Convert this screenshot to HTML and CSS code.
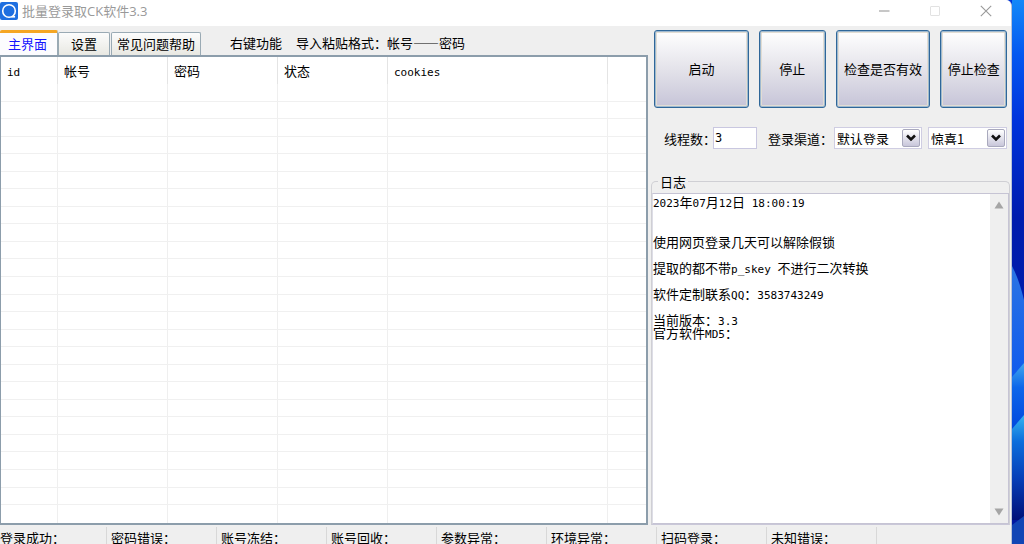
FILE: index.html
```html
<!DOCTYPE html>
<html lang="zh-CN">
<head>
<meta charset="utf-8">
<title>批量登录取CK软件3.3</title>
<link rel="stylesheet" href="styles.css">
</head>
<body>
<div class="desktop">
<div class="window">
  <header class="titlebar">
    <svg class="logo" width="18" height="18" viewBox="0 0 18 18" aria-hidden="true"><rect width="18" height="18" rx="2" fill="#1f6fe0"/><circle cx="9" cy="9" r="6.3" fill="none" stroke="#fff" stroke-width="1.6"/><path d="M11.5 14.8h3.6" stroke="#fff" stroke-width="1.6"/></svg>
    <h1 class="title">批量登录取CK软件3.3</h1>
    <div class="caption">
      <button aria-label="最小化"><svg width="12" height="12" viewBox="0 0 12 12"><path d="M1 6h10.500" stroke="#b5b5b5" stroke-width="1.300"/></svg></button>
      <button aria-label="最大化" disabled><svg width="12" height="12" viewBox="0 0 12 12"><rect x="1.500" y="1.500" width="9" height="9" rx="0.500" fill="none" stroke="#e2e2e2"/></svg></button>
      <button aria-label="关闭"><svg width="12" height="12" viewBox="0 0 12 12"><path d="M.8.8l10.400 10.400M11.200.8L.8 11.200" stroke="#999" stroke-width="1.100"/></svg></button>
    </div>
  </header>

  <main class="content">
    <section class="left">
      <div class="tabrow">
        <div class="tabs" role="tablist">
          <button class="tab active" role="tab" aria-selected="true">主界面</button>
          <button class="tab" role="tab" aria-selected="false">设置</button>
          <button class="tab" role="tab" aria-selected="false">常见问题帮助</button>
        </div>
        <span class="hint">右键功能</span>
        <span class="hint format">导入粘贴格式：帐号——密码</span>
      </div>
      <div class="panel">
        <table class="list">
          <colgroup><col class="c-id"><col class="c-mid"><col class="c-mid"><col class="c-mid"><col class="c-wide"><col></colgroup>
          <thead><tr><th><span class="en">id</span></th><th>帐号</th><th>密码</th><th>状态</th><th><span class="en">cookies</span></th><th></th></tr></thead>
          <tbody>
            <tr><td></td><td></td><td></td><td></td><td></td><td></td></tr>
            <tr><td></td><td></td><td></td><td></td><td></td><td></td></tr>
            <tr><td></td><td></td><td></td><td></td><td></td><td></td></tr>
            <tr><td></td><td></td><td></td><td></td><td></td><td></td></tr>
            <tr><td></td><td></td><td></td><td></td><td></td><td></td></tr>
            <tr><td></td><td></td><td></td><td></td><td></td><td></td></tr>
            <tr><td></td><td></td><td></td><td></td><td></td><td></td></tr>
            <tr><td></td><td></td><td></td><td></td><td></td><td></td></tr>
            <tr><td></td><td></td><td></td><td></td><td></td><td></td></tr>
            <tr><td></td><td></td><td></td><td></td><td></td><td></td></tr>
            <tr><td></td><td></td><td></td><td></td><td></td><td></td></tr>
            <tr><td></td><td></td><td></td><td></td><td></td><td></td></tr>
            <tr><td></td><td></td><td></td><td></td><td></td><td></td></tr>
            <tr><td></td><td></td><td></td><td></td><td></td><td></td></tr>
            <tr><td></td><td></td><td></td><td></td><td></td><td></td></tr>
            <tr><td></td><td></td><td></td><td></td><td></td><td></td></tr>
            <tr><td></td><td></td><td></td><td></td><td></td><td></td></tr>
            <tr><td></td><td></td><td></td><td></td><td></td><td></td></tr>
            <tr><td></td><td></td><td></td><td></td><td></td><td></td></tr>
            <tr><td></td><td></td><td></td><td></td><td></td><td></td></tr>
            <tr><td></td><td></td><td></td><td></td><td></td><td></td></tr>
            <tr><td></td><td></td><td></td><td></td><td></td><td></td></tr>
            <tr><td></td><td></td><td></td><td></td><td></td><td></td></tr>
            <tr><td></td><td></td><td></td><td></td><td></td><td></td></tr>
            <tr><td></td><td></td><td></td><td></td><td></td><td></td></tr>
          </tbody>
        </table>
      </div>
    </section>

    <section class="right">
      <div class="actions">
        <button class="action wide">启动</button>
        <button class="action">停止</button>
        <button class="action wide">检查是否有效</button>
        <button class="action">停止检查</button>
      </div>
      <div class="options">
        <label for="threads">线程数：</label>
        <input id="threads" class="threads" type="text" value="3">
        <label for="channel" class="channel-label">登录渠道：</label>
        <span class="combo channel">
          <select id="channel"><option>默认登录</option></select>
          <span class="drop"><svg width="10" height="8" viewBox="0 0 10 8"><path d="M1 1.500l4 4 4-4" fill="none" stroke="#111" stroke-width="2.600"/></svg></span>
        </span>
        <span class="combo mode">
          <select aria-label="登录方式"><option>惊喜1</option></select>
          <span class="drop"><svg width="10" height="8" viewBox="0 0 10 8"><path d="M1 1.500l4 4 4-4" fill="none" stroke="#111" stroke-width="2.600"/></svg></span>
        </span>
      </div>
      <fieldset class="group">
        <legend>日志</legend>
        <div class="log">
          <div class="log-text" role="log">
            <p><span class="en">2023</span>年<span class="en">07</span>月<span class="en">12</span>日<span class="en"> 18:00:19</span></p>
            <p class="apart">使用网页登录几天可以解除假锁</p>
            <p>提取的都不带<span class="en">p_skey </span>不进行二次转换</p>
            <p>软件定制联系<span class="en">QQ</span>：<span class="en">3583743249</span></p>
            <p>当前版本：<span class="en">3.3</span></p>
            <p class="joined">官方软件<span class="en">MD5</span>：</p>
          </div>
          <div class="scroll">
            <svg width="10" height="8" viewBox="0 0 10 8"><path d="M5 .5L9.500 7.500H.5z" fill="#a5a5a5"/></svg>
            <svg width="10" height="8" viewBox="0 0 10 8"><path d="M5 7.500L9.500.5H.5z" fill="#a5a5a5"/></svg>
          </div>
        </div>
      </fieldset>
    </section>
  </main>

  <footer class="status">
    <span>登录成功：</span><span>密码错误：</span><span>账号冻结：</span><span>账号回收：</span><span>参数异常：</span><span>环境异常：</span><span>扫码登录：</span><span>未知错误：</span>
  </footer>
</div>
<svg class="wallpaper" viewBox="0 0 12 544" preserveAspectRatio="none" aria-hidden="true">
  <defs>
    <linearGradient id="sky" x1="0" y1="0" x2="0" y2="1"><stop offset="0" stop-color="#1388f8"/><stop offset=".1" stop-color="#0458f0"/><stop offset=".22" stop-color="#0034dc"/><stop offset=".4" stop-color="#001cae"/><stop offset="1" stop-color="#0018a0"/></linearGradient>
    <linearGradient id="petal" x1="0" y1="0" x2="0" y2="1"><stop offset="0" stop-color="#2b74e4"/><stop offset="1" stop-color="#0a55ee"/></linearGradient>
    <linearGradient id="fold" x1="0" y1="0" x2="0" y2="1"><stop offset="0" stop-color="#40a8ec"/><stop offset=".35" stop-color="#0c66ea"/><stop offset="1" stop-color="#0044dc"/></linearGradient>
    <linearGradient id="base" x1="0" y1="0" x2="0" y2="1"><stop offset="0" stop-color="#36b4f0"/><stop offset=".25" stop-color="#0c6edc"/><stop offset=".6" stop-color="#063fb8"/><stop offset="1" stop-color="#001078"/></linearGradient>
  </defs>
  <path fill="url(#sky)" d="M0 0h12v544H0z"/>
  <path fill="url(#petal)" d="M0 266q7 13 12 34v100H0z"/>
  <path fill="url(#fold)" d="M0 377l12-14v70H0z"/>
  <path fill="url(#base)" d="M0 429l12-14v105H0z"/>
  <path fill="#1145b5" d="M0 525l12-9v28H0z"/>
</svg>
</div>
</body>
</html>
```
FILE: styles.css
```css
* { box-sizing: border-box; }

body {
  margin: 0;
  color: #000;
  font: 13px/13px "Noto Sans CJK SC", sans-serif;
}

button, input, select { font: inherit; color: inherit; }
.en { font: 11px/1px "DejaVu Sans Mono", monospace; white-space: pre; }

.desktop {
  display: flex;
  height: 100vh;
  overflow: hidden;
  background: #0034dc;
}
.wallpaper { flex: none; width: 12px; height: 100%; }

.window {
  flex: 1;
  min-width: 0;
  display: flex;
  flex-direction: column;
  background: #efefef;
  border-right: 1px solid #b9c3d6;
  border-top-right-radius: 6px;
  overflow: hidden;
}

.titlebar {
  flex: none;
  display: flex;
  align-items: center;
  height: 26px;
  padding-bottom: 4px;
  background: #fff;
}
.logo { flex: none; }
.title {
  margin: 0 auto 0 4px;
  color: #999;
  font: 13px/18px "Open Sans", "Noto Sans CJK SC", sans-serif;
}
.caption { display: flex; }
.caption button {
  display: grid;
  place-items: center;
  width: 51px;
  height: 22px;
  padding: 0;
  border: 0;
  background: none;
}

.content { flex: 1; min-height: 0; display: flex; }

.left { flex: 1; min-width: 0; display: flex; flex-direction: column; }
.tabrow { display: flex; align-items: flex-end; height: 29px; }
.tabs { display: flex; align-items: flex-end; margin-right: 29px; }
.tab {
  height: 23px;
  padding: 0 5px 2px;
  border: 1px solid #9aaab4;
  border-bottom: 0;
  border-radius: 2px 2px 0 0;
  background: linear-gradient(#fcfcfc, #e8e8e2);
  white-space: nowrap;
}
.tab:nth-child(2) { padding: 0 12px 2px; margin-right: 1px; }
.tab.active {
  height: 25px;
  padding: 0 10px 2px 8px;
  border-left: 0;
  border-top: 3px solid #f5a623;
  background: #fcfcfe;
  color: #1414ff;
}
.hint { padding-bottom: 6px; white-space: nowrap; }
.format { margin-left: 14px; }

.panel {
  flex: 1;
  min-height: 0;
  border: 2px solid #8c9dab;
  border-left-width: 1px;
  background: #fff;
  overflow: hidden;
}
.list {
  width: 100%;
  height: 100%;
  border-collapse: separate;
  border-spacing: 0;
  table-layout: fixed;
}
.c-id { width: 57px; }
.c-mid { width: 110px; }
.c-wide { width: 220px; }
.list th {
  height: 27px;
  padding: 0 0 0 6px;
  border-right: 1px solid #e4e4e4;
  font-weight: normal;
  text-align: left;
}
.list td {
  height: 17px;
  padding: 0;
  border-right: 1px solid #efefef;
  border-bottom: 1px solid #f0f0f0;
}
.list th:last-child, .list td:last-child { border-right: 0; }
.list tr:last-child td { border-bottom: 0; }

.right {
  flex: none;
  width: 363px;
  display: flex;
  flex-direction: column;
  padding: 4px 1px 0 3px;
}
.actions { display: flex; gap: 10px; padding: 0 3px; }
.action {
  flex: 66;
  height: 78px;
  padding: 0 0 2px;
  border: 1px solid #2f6799;
  border-radius: 3px;
  background: linear-gradient(#fff, #e4e3ea 50%, #c6c4d8);
  box-shadow: inset 0 0 0 1px #9fb9cf, inset 0 0 0 2px #e2ddd3;
  white-space: nowrap;
}
.action.wide { flex: 95; }

.options {
  display: flex;
  align-items: center;
  height: 22px;
  margin: 19px 3px 0 13px;
  white-space: nowrap;
}
.threads {
  width: 44px;
  height: 22px;
  margin: 0 11px 0 -3px;
  padding: 0 1px;
  border: 1px solid #c9c7e0;
  background: #fff;
  font: 12px/18px "DejaVu Sans Mono", monospace;
}
.combo {
  position: relative;
  height: 22px;
  border: 1px solid #cfcde2;
  background: #fff;
}
.channel { width: 88px; margin-left: 1px; }
.mode { width: 79px; margin-left: 6px; }
.combo select {
  appearance: none;
  display: block;
  width: 100%;
  height: 20px;
  padding: 0 20px 0 2px;
  border: 0;
  background: none;
}
.drop {
  position: absolute;
  top: 1px;
  right: 1px;
  display: grid;
  place-items: center;
  width: 18px;
  height: 18px;
  border: 1px solid #a9a9bd;
  border-radius: 2px;
  background: linear-gradient(#fff, #c8c6da);
  pointer-events: none;
}

.group {
  flex: 1;
  min-width: 0;
  min-height: 0;
  display: flex;
  margin: 26px 0 0;
  padding: 5px 0 0;
  border: 1px solid #cfcfd4;
  border-bottom-color: #c9c7d8;
  border-radius: 5px 5px 0 0;
}
.group legend { margin-left: 6px; padding: 0 2px; }
.log {
  width: 100%;
  height: 100%;
  display: flex;
  border: 1px solid #c6c4d4;
  border-left-color: #dddde6;
  background: #fff;
}
.log-text { flex: 1; padding: 1px 0 0; }
.log p { margin: 13px 0 0; white-space: nowrap; }
.log p:first-child, .log p.joined { margin-top: 0; }
.log p.apart { margin-top: 27px; }
.scroll {
  width: 18px;
  display: flex;
  flex-direction: column;
  justify-content: space-between;
  align-items: center;
  padding: 7px 0;
  background: #efefef;
}

.status {
  flex: none;
  display: flex;
  height: 19px;
  padding-top: 2px;
  overflow: hidden;
}
.status span {
  flex: none;
  width: 110px;
  padding-left: 4px;
  border-right: 1px solid #d8d8d8;
  line-height: 21px;
  white-space: nowrap;
}
.status span:first-child { width: 107px; padding-left: 0; }
```
